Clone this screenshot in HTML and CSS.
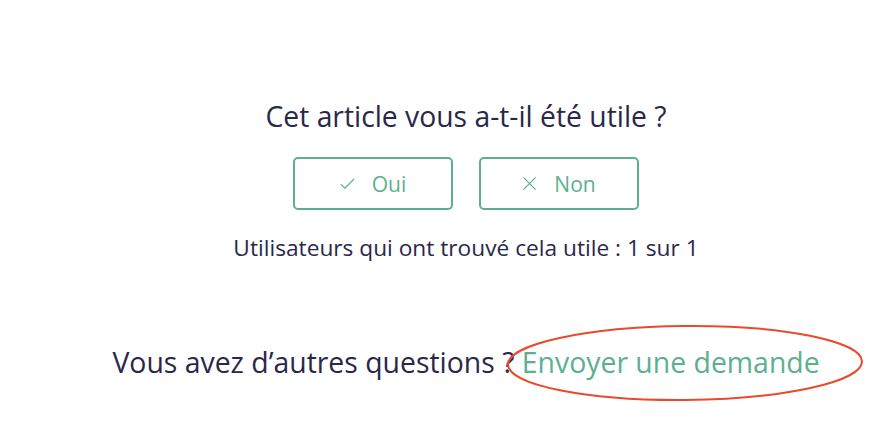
FILE: index.html
```html
<!DOCTYPE html>
<html lang="fr">
<head>
    <meta charset="UTF-8">
    <meta name="viewport" content="width=device-width, initial-scale=1.0">
    <title>Article</title>
    <link rel="stylesheet" href="styles.css">
</head>
<body>
    <div class="article-footer">
        <div class="article-votes">
            <h2 class="votes-question">Cet article vous a-t-il été utile ?</h2>
            <div class="votes-controls">
                <button class="vote-button">
                    <svg class="vote-icon" viewBox="0 0 16 16" width="16" height="16">
                        <path d="M1 8.8 L5.2 13 L15 3.2" fill="none" stroke="currentColor" stroke-width="1.3"/>
                    </svg>
                    Oui
                </button>
                <button class="vote-button">
                    <svg class="vote-icon" viewBox="0 0 16 16" width="16" height="16">
                        <path d="M1.5 1.5 L14.5 14.5 M14.5 1.5 L1.5 14.5" fill="none" stroke="currentColor" stroke-width="1.3"/>
                    </svg>
                    Non
                </button>
            </div>
            <p class="votes-label">Utilisateurs qui ont trouvé cela utile : 1 sur 1</p>
        </div>
        <div class="more-questions">
            Vous avez d’autres questions ?
            <a href="#" class="request-link">Envoyer une demande<svg class="highlight" viewBox="0 0 360 80" width="360" height="80">
                    <ellipse cx="180" cy="40" rx="177" ry="37" fill="none" stroke="#ea4a2c" stroke-width="2" transform="rotate(-0.5 180 40)"/>
                </svg></a>
        </div>
    </div>
</body>
</html>
```

FILE: styles.css
```css
body {
    margin: 0;
    background-color: #ffffff;
    font-family: 'Open Sans', 'Liberation Sans', sans-serif;
    color: #29284a;
}
.article-footer {
    min-height: 100vh;
    box-sizing: border-box;
    padding: 97px 0 0 48px;
    text-align: center;
}
.votes-question {
    margin: 0;
    font-size: 28.3px;
    font-weight: 400;
    line-height: 38px;
}
.votes-controls {
    display: flex;
    justify-content: center;
    gap: 26px;
    margin-top: 22px;
}
.vote-button {
    display: flex;
    align-items: center;
    justify-content: center;
    gap: 17px;
    width: 160px;
    height: 53px;
    border: 2px solid #5cb08f;
    border-radius: 5px;
    background: #ffffff;
    color: #5cb08f;
    font-family: inherit;
    font-size: 21px;
    padding: 0;
}
.vote-icon {
    width: 15px;
    height: 15px;
}
.votes-label {
    margin: 23px 0 0;
    font-size: 22.7px;
    line-height: 30px;
}
.more-questions {
    margin-top: 79px;
    font-size: 28.4px;
    line-height: 40px;
}
.request-link {
    position: relative;
    color: #5cb08f;
    text-decoration: none;
}
.highlight {
    position: absolute;
    left: -17px;
    top: -20px;
    pointer-events: none;
}
```
